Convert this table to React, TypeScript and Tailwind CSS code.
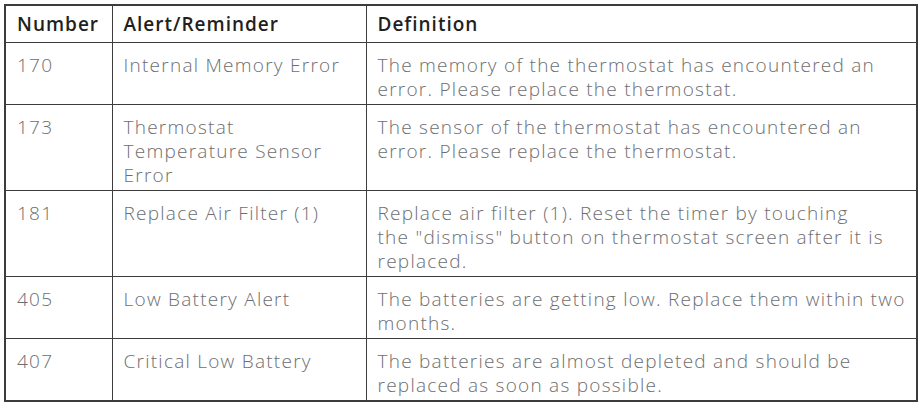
import React from "react";

const rows: [string, string[], string[]][] = [
  ["170", ["Internal Memory Error"], ["The memory of the thermostat has encountered an", "error. Please replace the thermostat."]],
  ["173", ["Thermostat", "Temperature Sensor", "Error"], ["The sensor of the thermostat has encountered an", "error. Please replace the thermostat."]],
  ["181", ["Replace Air Filter (1)"], ["Replace air filter (1). Reset the timer by touching", "the \"dismiss\" button on thermostat screen after it is", "replaced."]],
  ["405", ["Low Battery Alert"], ["The batteries are getting low. Replace them within two", "months."]],
  ["407", ["Critical Low Battery"], ["The batteries are almost depleted and should be", "replaced as soon as possible."]],
];

const th = "border-[1.5px] border-[#3c3c3c] text-left align-middle px-[11px] text-[19px] leading-[24px] font-semibold tracking-[1px] text-[#231f20]";
const td = "border-[1.5px] border-[#3c3c3c] align-top px-[11px] pt-[10px] pb-[3px] text-[19px] leading-[24px] font-light tracking-[1.25px] text-[#6d6e71] whitespace-nowrap";

function Lines({ lines }: { lines: string[] }) {
  return (
    <>
      {lines.map((l, i) => (
        <div key={i}>{l}</div>
      ))}
    </>
  );
}

export default function App() {
  return (
    <div className="w-[924px] h-[406px] bg-white pt-[4px] pl-[4px]" style={{ fontFamily: "'Open Sans', sans-serif" }}>
      <table className="border-collapse w-[914px] table-fixed border-2 border-[#3c3c3c]">
        <colgroup>
          <col className="w-[107px]" />
          <col className="w-[254px]" />
          <col />
        </colgroup>
        <thead>
          <tr className="h-[37px]">
            <th className={th}>Number</th>
            <th className={th}>Alert/Reminder</th>
            <th className={th}>Definition</th>
          </tr>
        </thead>
        <tbody>
          {rows.map((r) => (
            <tr key={r[0]}>
              <td className={td}>{r[0]}</td>
              <td className={td}><Lines lines={r[1]} /></td>
              <td className={td}><Lines lines={r[2]} /></td>
            </tr>
          ))}
        </tbody>
      </table>
    </div>
  );
}
